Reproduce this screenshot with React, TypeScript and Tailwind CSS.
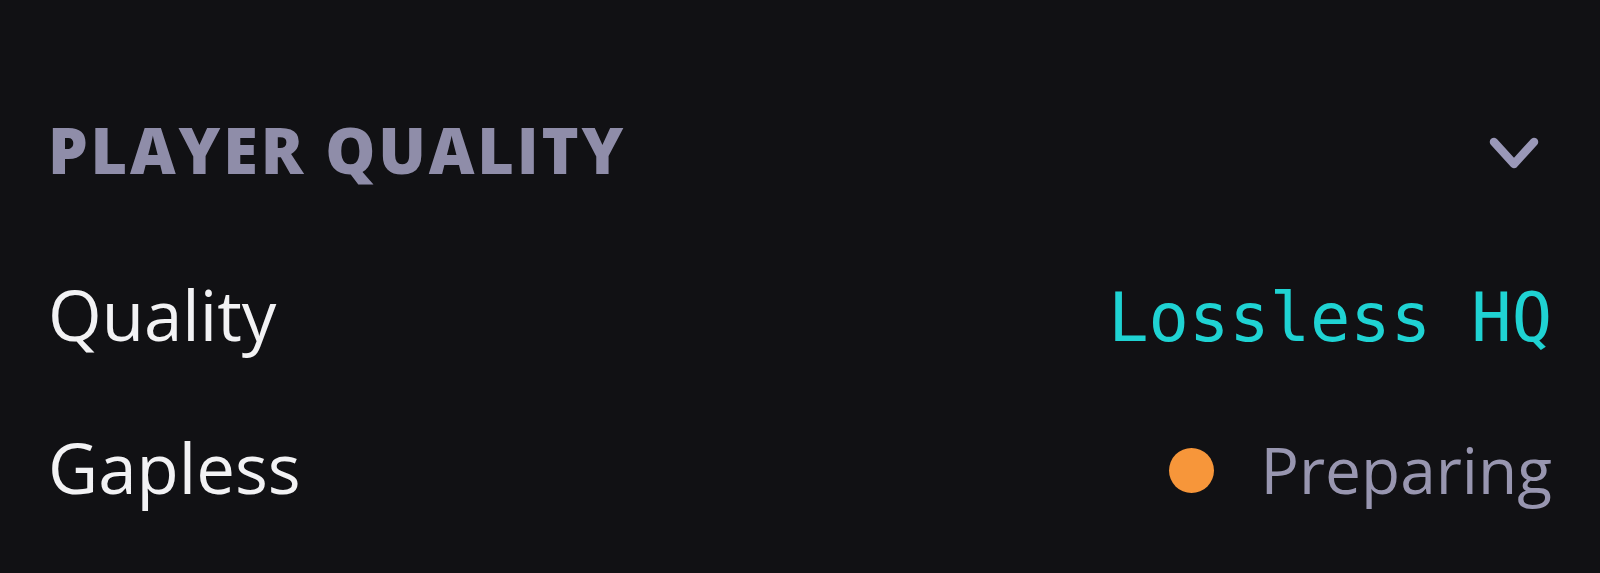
export default function App() {
  return (
    <div className="min-h-[573px] w-full bg-[#111114] px-12 pt-[118px] font-['Open_Sans',sans-serif]">
      <div className="flex items-center justify-between">
        <h2 className="text-[63px] font-extrabold uppercase leading-none tracking-[2.8px] text-[#8f8da9]">Player Quality</h2>
        <svg viewBox="0 0 52 38" className="mr-3 mt-[10px] h-[38px] w-[52px] text-[#9a98b8]" fill="none" stroke="currentColor" strokeWidth="8.5" strokeLinecap="round" strokeLinejoin="round">
          <polyline points="6,6 26,28 46,6" />
        </svg>
      </div>
      <div className="mt-[99px] flex items-baseline justify-between">
        <span className="text-[69px] leading-none text-[#f2f2f4]">Quality</span>
        <span className="font-['DejaVu_Sans_Mono',monospace] text-[67px] leading-none text-[#1fd3d3]">Lossless HQ</span>
      </div>
      <div className="mt-[81px] flex items-baseline justify-between">
        <span className="text-[69px] leading-none text-[#f2f2f4]">Gapless</span>
        <span className="text-[64px] leading-none text-[#9896b0]">
          <span className="mr-[46px] inline-block h-[45px] w-[45px] rounded-full bg-[#f7963a] align-[1px]" />
          Preparing
        </span>
      </div>
    </div>
  );
}
